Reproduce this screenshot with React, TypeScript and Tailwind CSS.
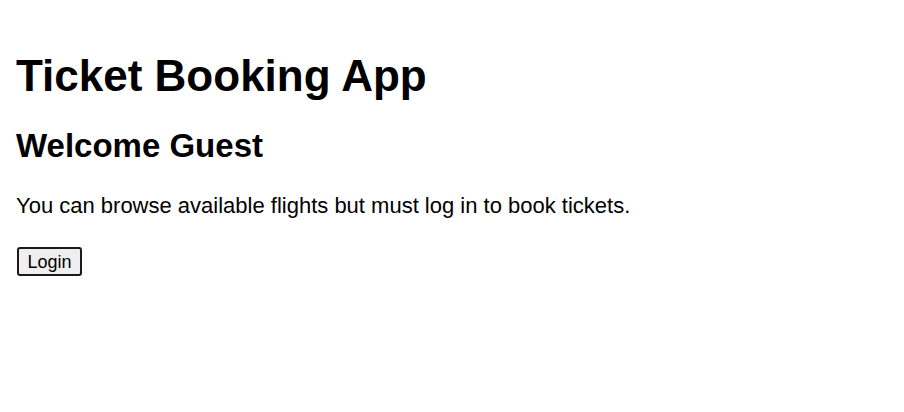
export default function App() {
  return (
    <div className="min-h-[412px] bg-white text-black pl-4 pt-[51px]" style={{ fontFamily: '"Liberation Sans", Arial, sans-serif' }}>
      <h1 className="text-[44px] leading-[50px] font-bold">Ticket Booking App</h1>
      <h2 className="mt-[26px] text-[33px] leading-[38px] font-bold">Welcome Guest</h2>
      <p className="mt-[28px] text-[22px] leading-[26px]">You can browse available flights but must log in to book tickets.</p>
      <button className="ml-px mt-[28px] h-[29px] w-[65px] border-2 border-[#1a1a1a] rounded-[3px] bg-[#efefef] text-[18px] leading-none">Login</button>
    </div>
  );
}
